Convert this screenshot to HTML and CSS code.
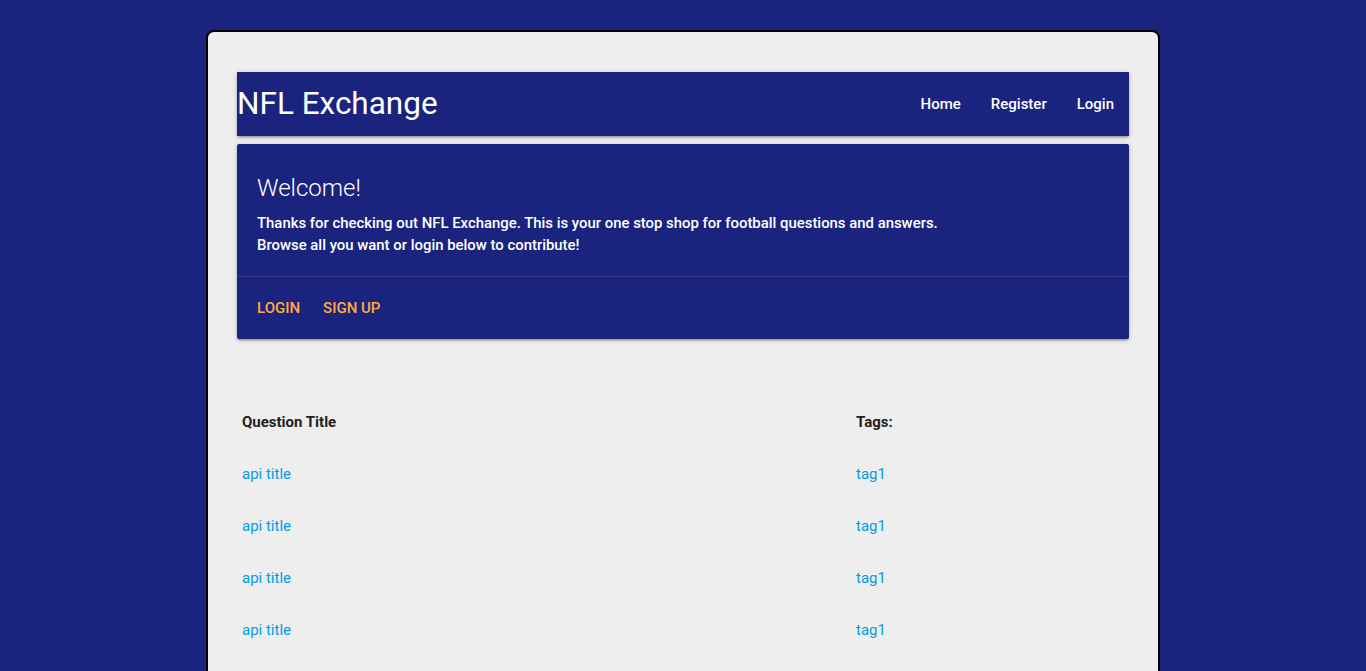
FILE: index.html
```html
<!DOCTYPE html>
<html>
<head>
<meta charset="utf-8">
<title>NFL Exchange</title>
<link rel="stylesheet" href="styles.css">
</head>
<body>
<div class="page">
  <nav class="navbar">
    <a class="brand" href="#">NFL Exchange</a>
    <ul class="nav-links">
      <li><a href="#">Home</a></li>
      <li><a href="#">Register</a></li>
      <li><a href="#">Login</a></li>
    </ul>
  </nav>
  <div class="card">
    <div class="card-content">
      <div class="card-title">Welcome!</div>
      <p>Thanks for checking out NFL Exchange. This is your one stop shop for football questions and answers.<br>Browse all you want or login below to contribute!</p>
    </div>
    <div class="card-action">
      <a href="#">Login</a>
      <a href="#">Sign Up</a>
    </div>
  </div>
  <table class="questions">
    <thead>
      <tr><th class="col-title">Question Title</th><th>Tags:</th></tr>
    </thead>
    <tbody>
      <tr><td><a href="#">api title</a></td><td><a href="#">tag1</a></td></tr>
      <tr><td><a href="#">api title</a></td><td><a href="#">tag1</a></td></tr>
      <tr><td><a href="#">api title</a></td><td><a href="#">tag1</a></td></tr>
      <tr><td><a href="#">api title</a></td><td><a href="#">tag1</a></td></tr>
    </tbody>
  </table>
</div>
</body>
</html>
```
FILE: styles.css
```css
html, body {
  margin: 0;
  padding: 0;
}
body {
  background: #1a237e;
  font-family: Roboto, "Liberation Sans", sans-serif;
  color: #212121;
  font-size: 15px;
  padding-top: 30px;
}
.page {
  width: 892px;
  margin: 0 auto;
  padding: 40px 29px 40px;
  background: #eeeeee;
  border: 2px solid #000;
  border-radius: 8px;
}
.navbar {
  height: 64px;
  background: #1a237e;
  display: flex;
  align-items: center;
  justify-content: space-between;
  box-shadow: 0 2px 2px 0 rgba(0,0,0,.14), 0 3px 1px -2px rgba(0,0,0,.12), 0 1px 5px 0 rgba(0,0,0,.2);
}
.brand {
  color: #fff;
  text-decoration: none;
  font-size: 31.5px;
  line-height: 64px;
  margin-top: -1px;
}
.nav-links {
  list-style: none;
  margin: 0;
  padding: 0;
  display: flex;
}
.nav-links a {
  display: block;
  color: #fff;
  text-decoration: none;
  font-weight: 500;
  font-size: 15px;
  padding: 0 15px;
  line-height: 64px;
}
.card {
  margin: 8px 0 16px;
  background: #1a237e;
  border-radius: 2px;
  color: #fff;
  box-shadow: 0 2px 2px 0 rgba(0,0,0,.14), 0 3px 1px -2px rgba(0,0,0,.12), 0 1px 5px 0 rgba(0,0,0,.2);
}
.card-content {
  padding: 28px 20px 20px;
}
.card-title {
  font-size: 24px;
  font-weight: 300;
  line-height: 32px;
  margin-bottom: 8px;
}
.card-content p {
  margin: 0;
  font-weight: 500;
  font-size: 14.9px;
  line-height: 22px;
}
.card-action {
  border-top: 1px solid rgba(160,160,160,.2);
  padding: 16px 20px 16px;
  display: flex;
  gap: 23px;
}
.card-action a {
  color: #ffab40;
  text-decoration: none;
  text-transform: uppercase;
  font-weight: 500;
  line-height: 30px;
}
.questions {
  width: 100%;
  border-collapse: collapse;
  margin-top: 57px;
}
.questions th, .questions td {
  text-align: left;
  padding: 15px 5px;
  line-height: 22px;
  vertical-align: middle;
}
.questions th {
  font-weight: 700;
  font-size: 15px;
}
.col-title {
  width: 604px;
}
.questions a {
  color: #039be5;
  text-decoration: none;
}
```
